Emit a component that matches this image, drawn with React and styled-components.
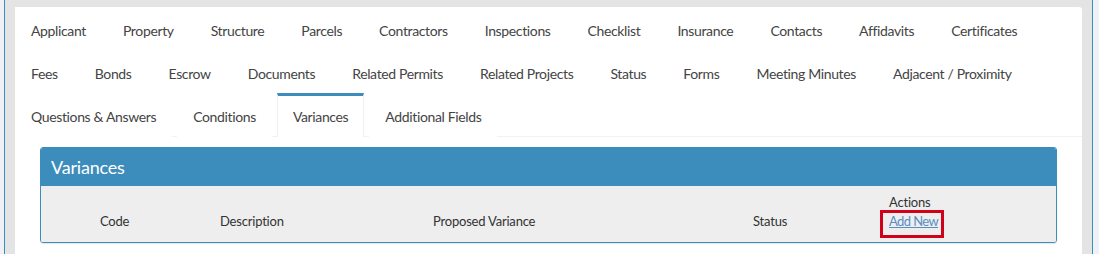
import React from 'react'
import styled, { createGlobalStyle } from 'styled-components'

const GlobalStyle = createGlobalStyle`
  body {
    margin: 0;
    background: #eef2f6;
    font-family: Lato, "Liberation Sans", sans-serif;
    font-size: 14px;
    color: #444;
  }
`

const tabRows = [
  'Applicant', 'Property', 'Structure', 'Parcels', 'Contractors', 'Inspections',
  'Checklist', 'Insurance', 'Contacts', 'Affidavits', 'Certificates',
  'Fees', 'Bonds', 'Escrow', 'Documents', 'Related Permits', 'Related Projects',
  'Status', 'Forms', 'Meeting Minutes', 'Adjacent / Proximity',
  'Questions & Answers', 'Conditions', 'Variances', 'Additional Fields'
]

const columns = ['', 'Code', 'Description', 'Proposed Variance', 'Status']

class App extends React.Component {
  state = { active: 'Variances' }

  render() {
    const { active } = this.state
    return (
      <>
        <GlobalStyle />
        <Frame>
          <Card>
            <TabBar>
              {tabRows.map(t => (
                <Tab key={t} active={t === active} onClick={() => this.setState({ active: t })}>
                  {t}
                </Tab>
              ))}
            </TabBar>
            <TabContent>
              <Panel>
                <PanelHeader>Variances</PanelHeader>
                <HeadRow>
                  {columns.map((c, i) => <HeadCell key={i}>{c}</HeadCell>)}
                  <HeadCell>
                    <div>Actions</div>
                    <AddLink href="#">Add New</AddLink>
                  </HeadCell>
                </HeadRow>
              </Panel>
            </TabContent>
          </Card>
        </Frame>
      </>
    )
  }
}

const Frame = styled.div`
  margin-left: 4px;
  width: 1089px;
  min-height: 254px;
  box-sizing: border-box;
  padding: 7px 10px 0 10px;
  background: #e4e4e4;
  border-left: 1px solid #3c8dbc;
  border-right: 1px solid #3c8dbc;
`

const Card = styled.div`
  background: #fff;
  border-radius: 3px;
  min-height: 260px;
`

const TabBar = styled.div`
  display: flex;
  flex-wrap: wrap;
  border-bottom: 1px solid #f2f2f2;
`

const Tab = styled.div`
  padding: 11px 15px 10px;
  line-height: 20px;
  letter-spacing: -0.36px;
  margin-right: 5px;
  margin-bottom: -1px;
  cursor: pointer;
  color: #444;
  background: #fff;
  border-top: 3px solid ${p => (p.active ? '#3c8dbc' : 'transparent')};
  border-left: 1px solid ${p => (p.active ? '#f0f0f0' : 'transparent')};
  border-right: 1px solid ${p => (p.active ? '#f0f0f0' : 'transparent')};
`

const TabContent = styled.div`
  padding: 10px 25px;
`

const Panel = styled.div`
  border: 1px solid #3c8dbc;
  border-radius: 3px;
  overflow: hidden;
  box-shadow: 0 1px 1px rgba(0, 0, 0, 0.1);
`

const PanelHeader = styled.div`
  background: #3c8dbc;
  color: #fff;
  font-size: 18px;
  line-height: 20px;
  letter-spacing: -0.2px;
  padding: 9px 10px 9px 10px;
`

const HeadRow = styled.div`
  display: grid;
  grid-template-columns: 51px 120px 213px 320px 136px 1fr;
  align-items: end;
  padding: 7px 8px 11px 8px;
  background: #eeeeee;
  line-height: 19px;
  font-size: 13px;
  letter-spacing: -0.2px;
  color: #333;
`

const HeadCell = styled.div`
  white-space: nowrap;
`

const AddLink = styled.a`
  position: relative;
  color: #5b8dc4;
  text-decoration: underline;
  letter-spacing: -0.6px;

  &::after {
    content: '';
    position: absolute;
    left: -9px;
    top: -3px;
    width: 64px;
    height: 28px;
    box-sizing: border-box;
    border: 3px solid #d0021b;
  }
`

export default App
